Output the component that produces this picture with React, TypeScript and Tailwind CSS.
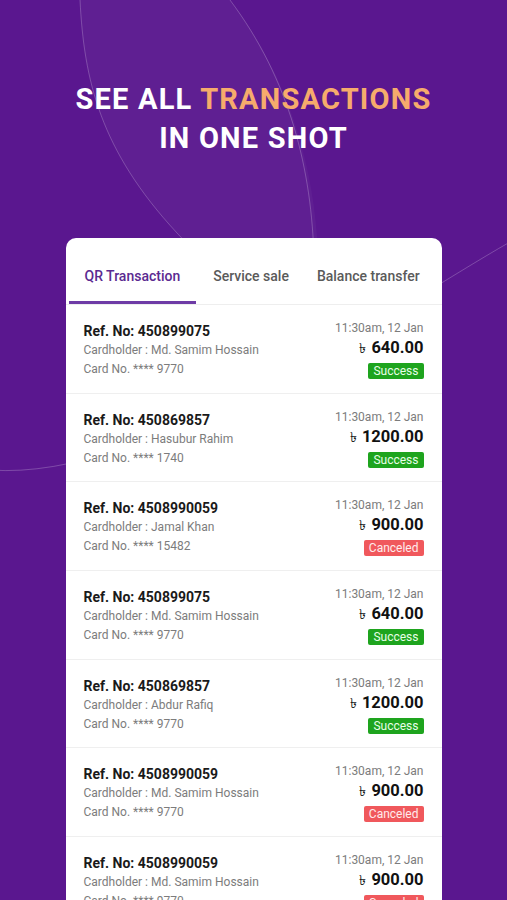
import React from 'react';

type Txn = {
  ref: string;
  holder: string;
  card: string;
  amount: string;
  status: 'Success' | 'Canceled';
};

const txns: Txn[] = [
  { ref: '450899075', holder: 'Md. Samim Hossain', card: '9770', amount: '640.00', status: 'Success' },
  { ref: '450869857', holder: 'Hasubur Rahim', card: '1740', amount: '1200.00', status: 'Success' },
  { ref: '4508990059', holder: 'Jamal Khan', card: '15482', amount: '900.00', status: 'Canceled' },
  { ref: '450899075', holder: 'Md. Samim Hossain', card: '9770', amount: '640.00', status: 'Success' },
  { ref: '450869857', holder: 'Abdur Rafiq', card: '9770', amount: '1200.00', status: 'Success' },
  { ref: '4508990059', holder: 'Md. Samim Hossain', card: '9770', amount: '900.00', status: 'Canceled' },
  { ref: '4508990059', holder: 'Md. Samim Hossain', card: '9770', amount: '900.00', status: 'Canceled' },
];

const Backdrop = () => (
  <svg className="absolute inset-0 h-full w-full" viewBox="0 0 507 900" fill="none">
    {/* leaf shape top-left */}
    <path
      d="M80,0 C84,80 100,150 177,233 C230,290 300,300 318,280 C320,200 300,90 230,0 Z"
      fill="rgba(255,255,255,0.035)"
    />
    <path d="M80,0 C84,80 100,150 177,233 C200,258 215,270 235,285" stroke="rgba(255,255,255,0.22)" strokeWidth="1" />
    <path d="M230,0 C290,80 312,170 314,260" stroke="rgba(255,255,255,0.22)" strokeWidth="1" />
    {/* big arc */}
    <path d="M-10,470 C150,482 390,310 510,242" stroke="rgba(255,255,255,0.22)" strokeWidth="1" />
  </svg>
);

const Row = ({ t }: { t: Txn }) => (
  <div className="flex h-[88.7px] justify-between border-b border-[#efefef] px-[18px]">
    <div className="flex flex-col pt-4">
      <div className="text-[14px] leading-[20px] font-bold text-[#1a1a1a]">Ref. No: {t.ref}</div>
      <div className="text-[12px] leading-[19px] text-[#7c7c7c]">Cardholder : {t.holder}</div>
      <div className="text-[12px] leading-[19px] text-[#7c7c7c]">Card No. **** {t.card}</div>
    </div>
    <div className="flex flex-col items-end pt-[14px]">
      <div className="text-[12px] leading-[18px] text-[#7c7c7c]">11:30am, 12 Jan</div>
      <div className="flex items-baseline gap-[5px] text-[16.5px] leading-[22px] font-bold text-[#111]">
        <span className="text-[14px] font-normal">৳</span>
        <span>{t.amount}</span>
      </div>
      <div
        className={
          t.status === 'Success'
            ? 'mt-1 rounded-[2px] bg-[#1ea41e] px-[5px] text-[12px] leading-[16px] text-[#e8ffe8]'
            : 'mt-1 rounded-[2px] bg-[#f0585c] px-[5px] text-[12px] leading-[16px] text-[#ffecec]'
        }
      >
        {t.status}
      </div>
    </div>
  </div>
);

export default function App() {
  return (
    <div className="relative h-[900px] w-full overflow-hidden bg-[#5a178f] font-['Roboto','Noto_Sans','DejaVu_Sans',sans-serif]">
      <Backdrop />

      <div className="relative flex flex-col items-center pt-[80px]">
        {/* Headline */}
        <h1 className="text-center text-[29px] leading-[39px] font-bold tracking-[1.2px] text-white">
          SEE ALL <span className="text-[#f6ab6c]">TRANSACTIONS</span>
          <br />
          IN ONE SHOT
        </h1>

        {/* Card */}
        <div className="mt-[80px] w-[376px] overflow-hidden rounded-[10px] bg-white">
          <div className="flex border-b border-[#eeeeee] pl-[3px] pt-[28px]">
            <div className="flex flex-col items-center">
              <div className="px-4 text-[14px] leading-[20px] font-medium text-[#5b2a91]">QR Transaction</div>
              <div className="mt-[15px] h-[3px] w-full bg-[#6e3ba6]" />
            </div>
            <div className="ml-[1px] px-4 text-[14px] leading-[20px] font-medium text-[#5a5a5a]">Service sale</div>
            <div className="ml-[-4px] px-4 text-[14px] leading-[20px] font-medium text-[#5a5a5a]">Balance transfer</div>
          </div>

          {txns.map((t, i) => (
            <Row key={i} t={t} />
          ))}
        </div>
      </div>
    </div>
  );
}
